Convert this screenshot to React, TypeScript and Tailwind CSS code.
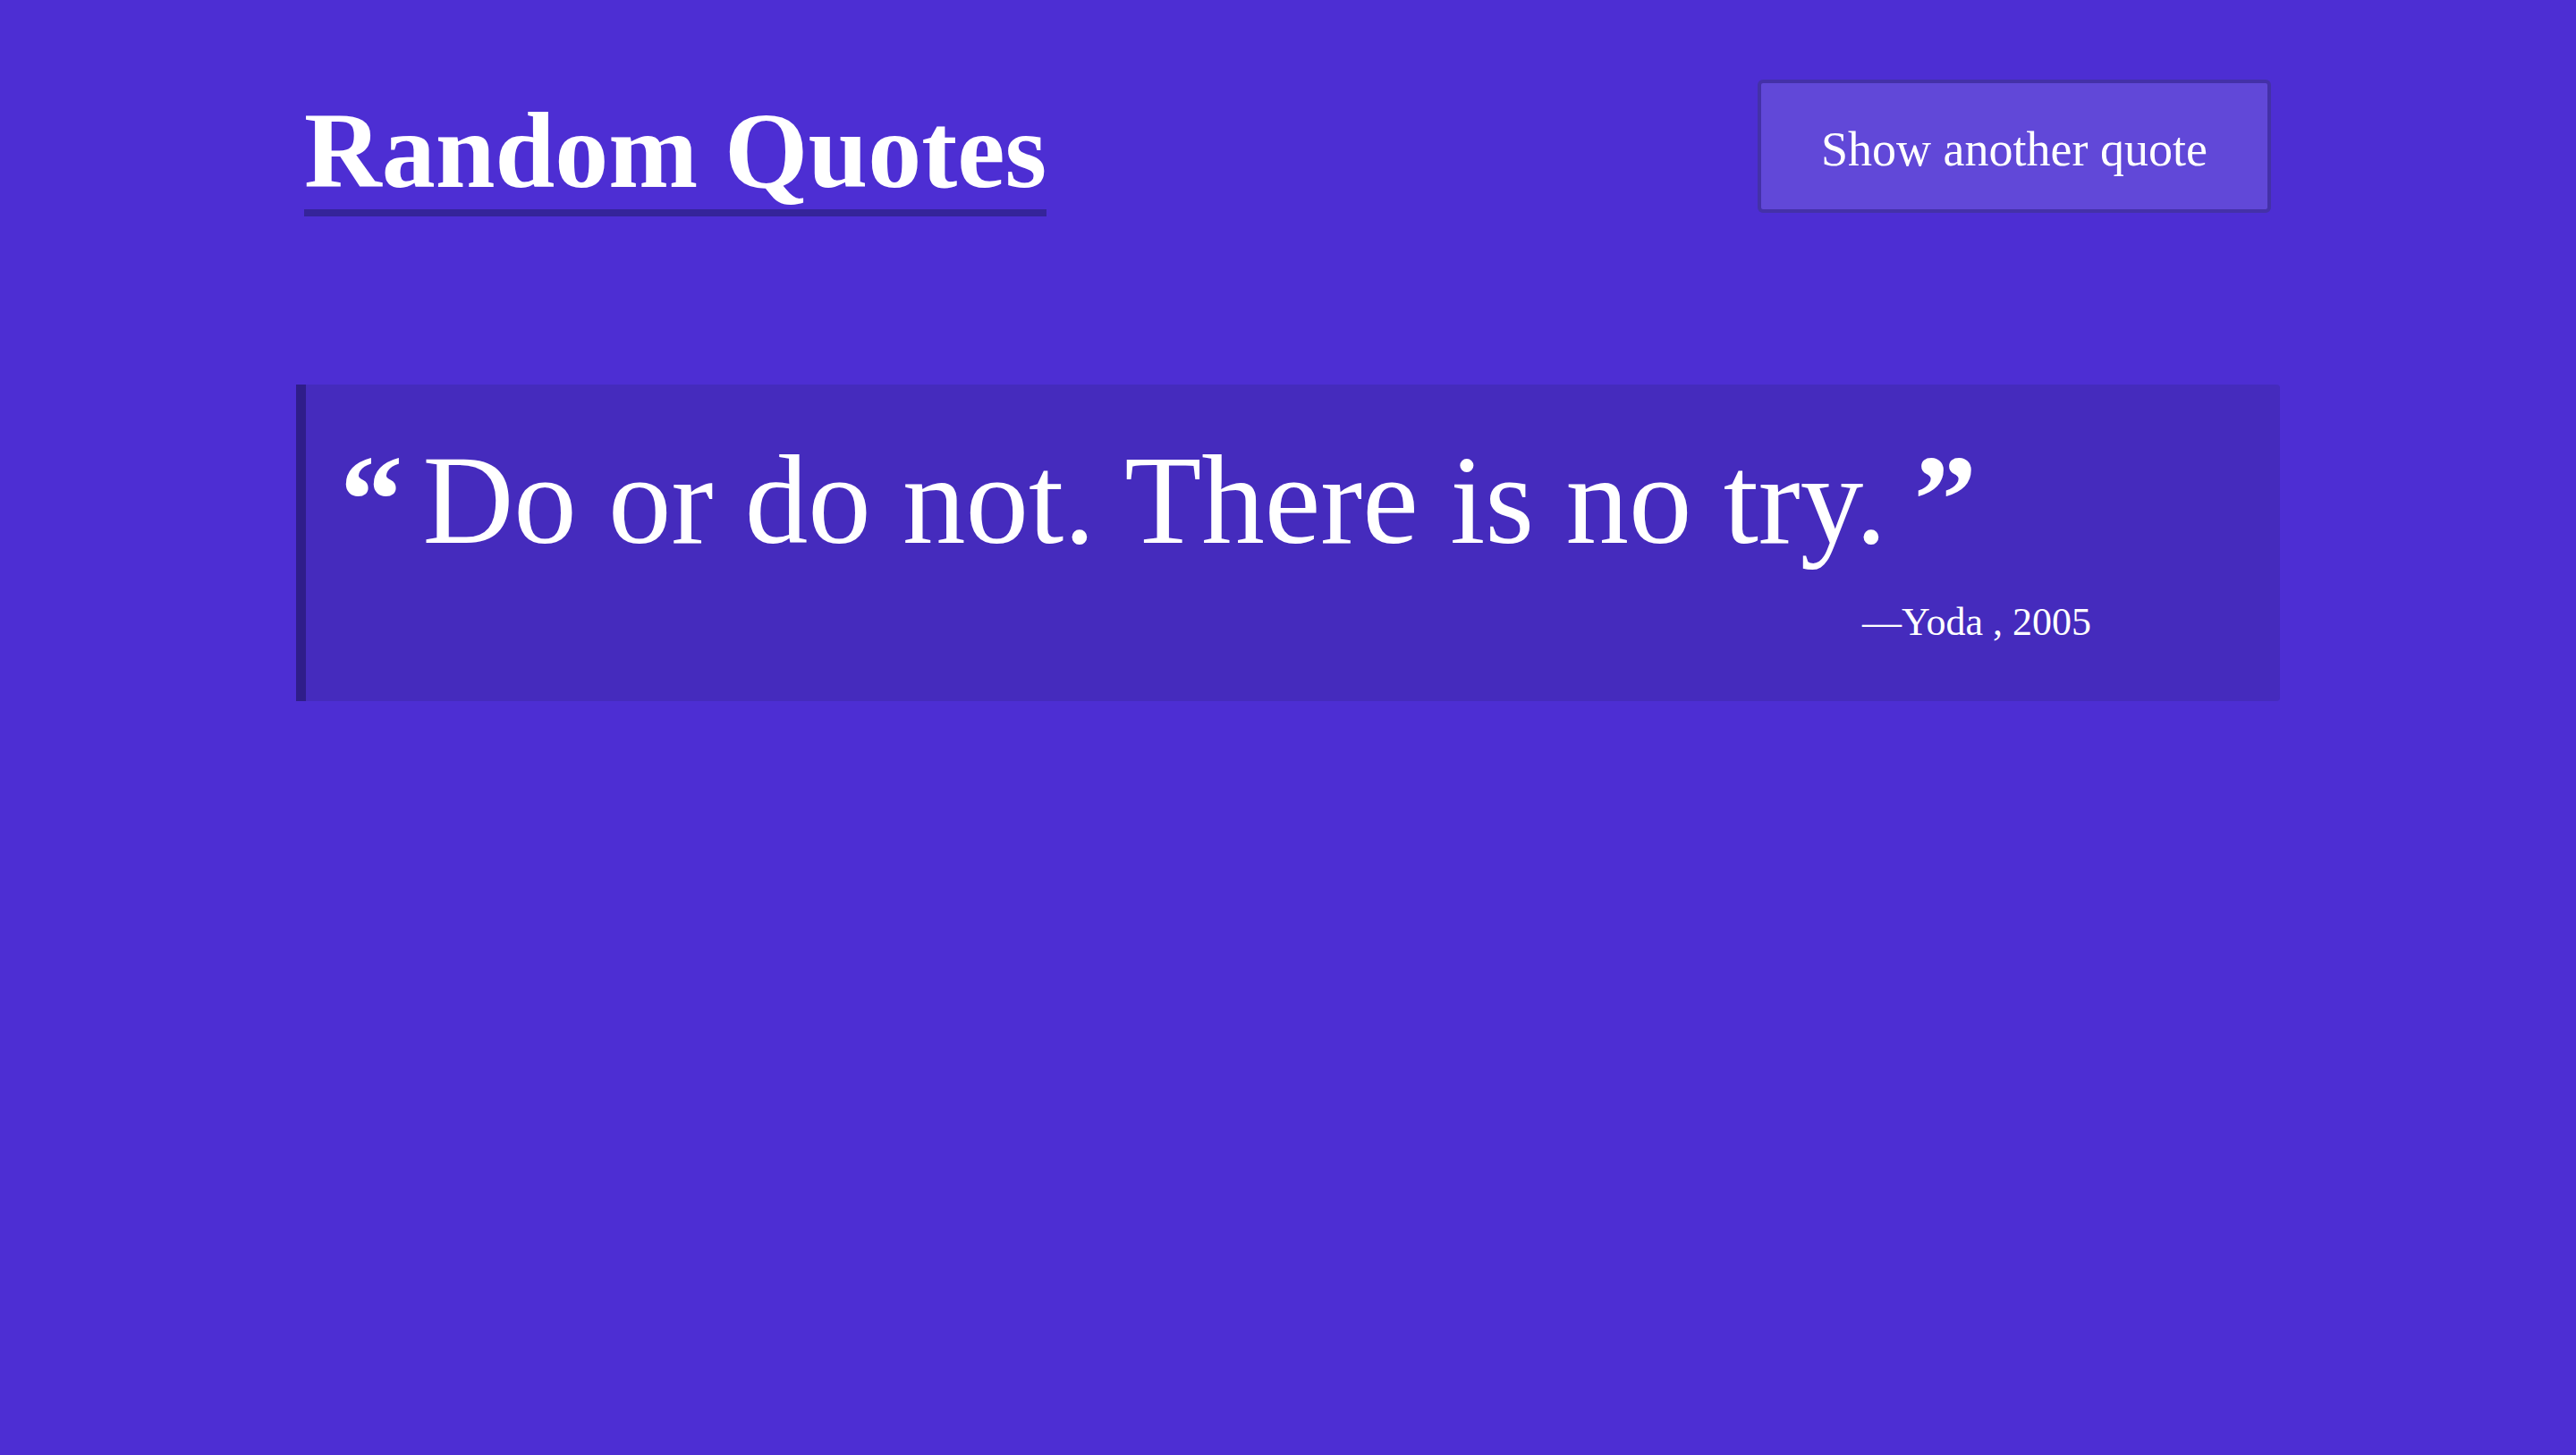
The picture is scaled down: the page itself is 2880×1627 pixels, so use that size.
import React from "react";

export default function App() {
  const serif = { fontFamily: '"Liberation Serif", "DejaVu Serif", serif' };
  return (
    <div className="min-h-screen w-full bg-[#4d2ed3] text-white" style={serif}>
      <div className="mx-auto w-[2218px] pt-[89px]">
        <header className="flex h-[154px] items-start justify-between">
          <h1 className="ml-[9px] mt-[20px] inline-block border-b-[8px] border-[#35249a] pb-[5px] text-[120px] font-bold leading-none">
            Random Quotes
          </h1>
          <button className="mr-[10px] flex h-[149px] w-[574px] items-center justify-center rounded-[6px] border-[4px] border-[#4431a8] bg-[#6148d8] pt-[6px] text-[54px] leading-none text-white">
            Show another quote
          </button>
        </header>
        <section className="mt-[187px] rounded-r-[4px] border-l-[11px] border-[#2f1d8a] bg-[#452bbd] pb-[66px] pl-[38px] pr-[211px] pt-[59px]">
          <p className="text-[141px] leading-none">
            <span className="mr-[22px] font-bold">“</span>
            Do or do not. There is no try.
            <span className="ml-[30px] font-bold">”</span>
          </p>
          <p className="mt-[44px] text-right text-[44px] leading-none">—Yoda , 2005</p>
        </section>
      </div>
    </div>
  );
}
